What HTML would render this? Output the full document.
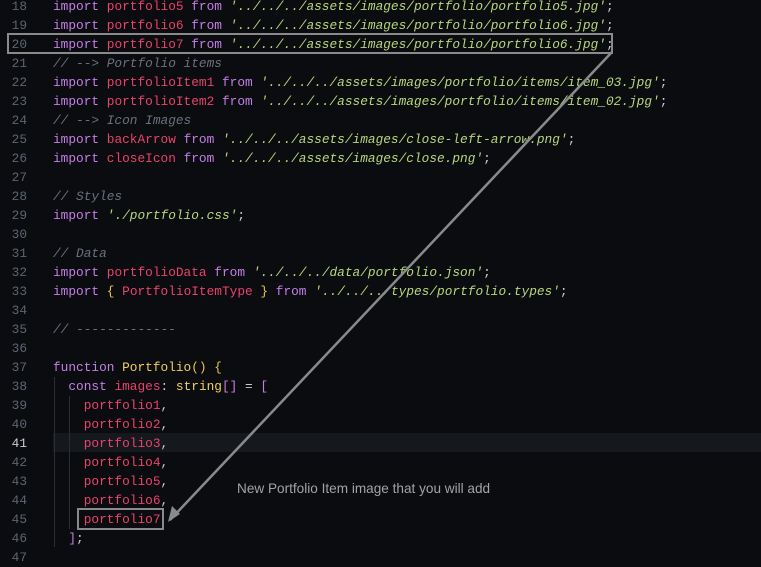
<!DOCTYPE html>
<html><head><style>
body{margin:0;width:761px;height:558px;background:#0a0c10;overflow:hidden;position:relative;font-family:"Liberation Mono",monospace;font-size:12.8px}
.l{position:absolute;left:0;height:19px;line-height:19px;white-space:pre;width:761px}
.n{position:absolute;left:0;width:27px;text-align:right;color:#5d6571}
.c{position:absolute;left:53px;color:#c8ccd4}
.k{color:#c47ee6}.v{color:#e8436a}.s{color:#b8d67c;font-style:italic}.m{color:#6b717c;font-style:italic}.f{color:#efcf5a}.p{color:#c8ccd4}.y{color:#e9c44a}
</style></head><body>
<div style="position:absolute;left:53px;top:433px;width:708px;height:19px;background:#15181d"></div>
<div style="position:absolute;left:54px;top:377px;width:1px;height:170px;background:#2a2e35"></div>
<div style="position:absolute;left:69px;top:396px;width:1px;height:133px;background:#2a2e35"></div>
<div class="l" style="top:-3px"><span class="n">18</span><span class="c"><span class="k">import</span> <span class="v">portfolio5</span> <span class="k">from</span> <span class="s">'../../../assets/images/portfolio/portfolio5.jpg'</span>;</span></div>
<div class="l" style="top:16px"><span class="n">19</span><span class="c"><span class="k">import</span> <span class="v">portfolio6</span> <span class="k">from</span> <span class="s">'../../../assets/images/portfolio/portfolio6.jpg'</span>;</span></div>
<div class="l" style="top:35px"><span class="n">20</span><span class="c"><span class="k">import</span> <span class="v">portfolio7</span> <span class="k">from</span> <span class="s">'../../../assets/images/portfolio/portfolio6.jpg'</span>;</span></div>
<div class="l" style="top:54px"><span class="n">21</span><span class="c"><span class="m">// --> Portfolio items</span></span></div>
<div class="l" style="top:73px"><span class="n">22</span><span class="c"><span class="k">import</span> <span class="v">portfolioItem1</span> <span class="k">from</span> <span class="s">'../../../assets/images/portfolio/items/item_03.jpg'</span>;</span></div>
<div class="l" style="top:92px"><span class="n">23</span><span class="c"><span class="k">import</span> <span class="v">portfolioItem2</span> <span class="k">from</span> <span class="s">'../../../assets/images/portfolio/items/item_02.jpg'</span>;</span></div>
<div class="l" style="top:111px"><span class="n">24</span><span class="c"><span class="m">// --> Icon Images</span></span></div>
<div class="l" style="top:130px"><span class="n">25</span><span class="c"><span class="k">import</span> <span class="v">backArrow</span> <span class="k">from</span> <span class="s">'../../../assets/images/close-left-arrow.png'</span>;</span></div>
<div class="l" style="top:149px"><span class="n">26</span><span class="c"><span class="k">import</span> <span class="v">closeIcon</span> <span class="k">from</span> <span class="s">'../../../assets/images/close.png'</span>;</span></div>
<div class="l" style="top:168px"><span class="n">27</span></div>
<div class="l" style="top:187px"><span class="n">28</span><span class="c"><span class="m">// Styles</span></span></div>
<div class="l" style="top:206px"><span class="n">29</span><span class="c"><span class="k">import</span> <span class="s">'./portfolio.css'</span>;</span></div>
<div class="l" style="top:225px"><span class="n">30</span></div>
<div class="l" style="top:244px"><span class="n">31</span><span class="c"><span class="m">// Data</span></span></div>
<div class="l" style="top:263px"><span class="n">32</span><span class="c"><span class="k">import</span> <span class="v">portfolioData</span> <span class="k">from</span> <span class="s">'../../../data/portfolio.json'</span>;</span></div>
<div class="l" style="top:282px"><span class="n">33</span><span class="c"><span class="k">import</span> <span class="y">{</span> <span class="v">PortfolioItemType</span> <span class="y">}</span> <span class="k">from</span> <span class="s">'../../../types/portfolio.types'</span>;</span></div>
<div class="l" style="top:301px"><span class="n">34</span></div>
<div class="l" style="top:320px"><span class="n">35</span><span class="c"><span class="m">// -------------</span></span></div>
<div class="l" style="top:339px"><span class="n">36</span></div>
<div class="l" style="top:358px"><span class="n">37</span><span class="c"><span class="k">function</span> <span class="f">Portfolio</span><span class="y">() {</span></span></div>
<div class="l" style="top:377px"><span class="n">38</span><span class="c">  <span class="k">const</span> <span class="v">images</span><span class="p">:</span> <span class="f">string</span><span class="k">[]</span> <span class="p">=</span> <span class="k">[</span></span></div>
<div class="l" style="top:396px"><span class="n">39</span><span class="c">    <span class="v">portfolio1</span>,</span></div>
<div class="l" style="top:415px"><span class="n">40</span><span class="c">    <span class="v">portfolio2</span>,</span></div>
<div class="l" style="top:434px"><span class="n" style="color:#c8ccd4">41</span><span class="c">    <span class="v">portfolio3</span>,</span></div>
<div class="l" style="top:453px"><span class="n">42</span><span class="c">    <span class="v">portfolio4</span>,</span></div>
<div class="l" style="top:472px"><span class="n">43</span><span class="c">    <span class="v">portfolio5</span>,</span></div>
<div class="l" style="top:491px"><span class="n">44</span><span class="c">    <span class="v">portfolio6</span>,</span></div>
<div class="l" style="top:510px"><span class="n">45</span><span class="c">    <span class="v">portfolio7</span></span></div>
<div class="l" style="top:529px"><span class="n">46</span><span class="c">  <span class="k">]</span>;</span></div>
<div class="l" style="top:548px"><span class="n">47</span></div>
<div style="position:absolute;left:7px;top:33px;width:602px;height:17px;border:2px solid #8a8a8a"></div>
<div style="position:absolute;left:77px;top:508px;width:83px;height:18px;border:2px solid #8a8a8a"></div>
<svg style="position:absolute;left:0;top:0" width="761" height="558"><line x1="612" y1="52" x2="170" y2="520" stroke="#8a8a8a" stroke-width="2.5"/><path d="M168 522 L172 506 L180 514 Z" fill="#8a8a8a"/></svg>
<div style="position:absolute;left:237px;top:481px;font-family:'Liberation Sans',sans-serif;font-size:13.6px;color:#a3a3a3">New Portfolio Item image that you will add</div>
</body></html>
